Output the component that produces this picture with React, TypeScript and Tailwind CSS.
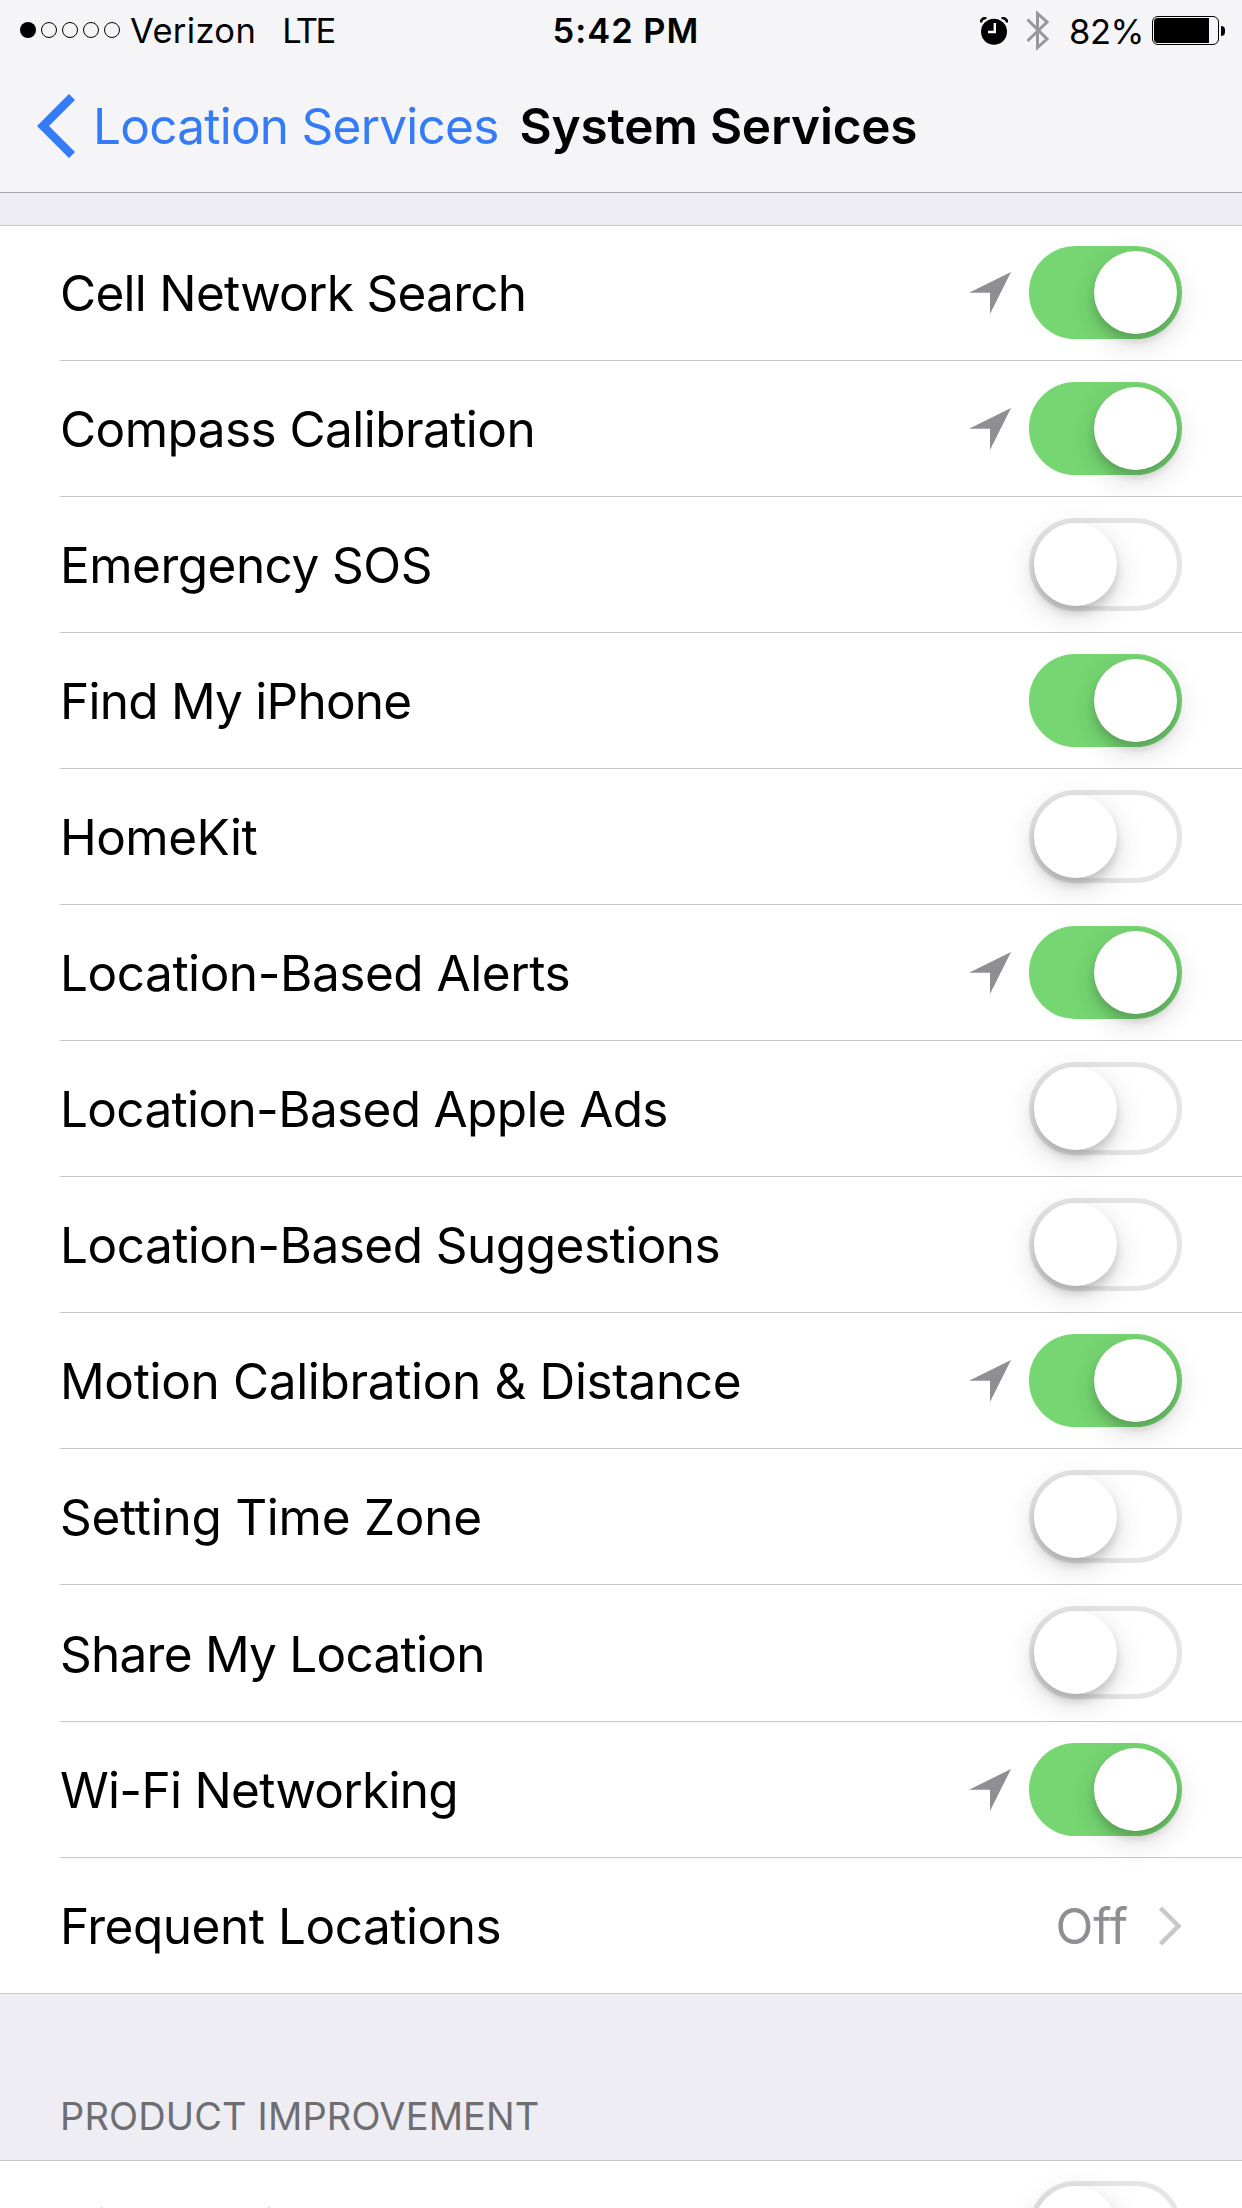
import { useState } from 'react';

type Service = {
  id: string;
  label: string;
  enabled: boolean;
  recentlyUsed?: boolean;
  // letter spacing of the label
  tracking: string;
  // row height, where it is not the usual one
  row?: string;
};

const services: Service[] = [
  { id: 'cell', label: 'Cell Network Search', enabled: true, recentlyUsed: true, tracking: 'pt-[2px] tracking-[-0.72px]', row: 'h-[135px] pb-px' },
  { id: 'compass', label: 'Compass Calibration', enabled: true, recentlyUsed: true, tracking: 'pt-[2px] tracking-[-0.56px]' },
  { id: 'sos', label: 'Emergency SOS', enabled: false, tracking: 'pt-[2px] tracking-[-0.52px]' },
  { id: 'find', label: 'Find My iPhone', enabled: true, tracking: 'pt-[2px] tracking-[-0.76px]' },
  { id: 'homekit', label: 'HomeKit', enabled: false, tracking: 'pt-[2px] tracking-[-0.55px]' },
  { id: 'alerts', label: 'Location-Based Alerts', enabled: true, recentlyUsed: true, tracking: 'pt-[2px] tracking-[-0.46px]' },
  { id: 'ads', label: 'Location-Based Apple Ads', enabled: false, tracking: 'pt-[2px] tracking-[-0.66px]' },
  { id: 'suggestions', label: 'Location-Based Suggestions', enabled: false, tracking: 'pt-[2px] tracking-[-0.51px]' },
  { id: 'motion', label: 'Motion Calibration & Distance', enabled: true, recentlyUsed: true, tracking: 'pt-[2px] tracking-[-0.35px]' },
  { id: 'timezone', label: 'Setting Time Zone', enabled: false, tracking: 'pt-[2px] tracking-[-0.27px]' },
  { id: 'share', label: 'Share My Location', enabled: false, tracking: 'pt-[4px] tracking-[-0.75px]', row: 'h-[137px] pb-px' },
  { id: 'wifi', label: 'Wi-Fi Networking', enabled: true, recentlyUsed: true, tracking: 'pt-[2px] tracking-[-0.7px]' },
];

function LocationArrow() {
  return (
    <svg className="mr-[18px] h-[42px] w-[42px]" viewBox="0 0 42 42" fill="#8e8e93">
      <path d="M42 0 L0 20.8 H21 V42 Z" />
    </svg>
  );
}

type SwitchProps = {
  checked: boolean;
  label: string;
  onChange: () => void;
};

function Switch({ checked, label, onChange }: SwitchProps) {
  return (
    <button
      aria-checked={checked}
      aria-label={label}
      className={`flex h-[93px] w-[153px] shrink-0 rounded-full border-[5px] ${
        checked ? 'justify-end border-[#76d772] bg-[#76d772]' : 'justify-start border-[#e5e5e5] bg-white'
      }`}
      onClick={onChange}
      role="switch"
      type="button"
    >
      <span className="h-[83px] w-[83px] rounded-full bg-white shadow-[0_7px_8px_rgba(0,0,0,0.14),0_9px_30px_rgba(0,0,0,0.16)]" />
    </button>
  );
}

function StatusBar() {
  return (
    <div className="flex h-[60px] items-center text-[34.5px] leading-[60px]">
      <div className="flex w-[552.5px] items-center pl-5">
        <div className="flex gap-[5px]">
          <span className="h-4 w-4 rounded-full bg-black" />
          {[1, 2, 3, 4].map((dot) => (
            <span className="h-4 w-4 rounded-full border border-black" key={dot} />
          ))}
        </div>
        <span className="ml-[10px] pt-[2px] tracking-[0.35px]">Verizon</span>
        <span className="ml-[26px] pt-[2px] tracking-[-2.5px]">LTE</span>
      </div>
      <span className="pt-[2px] font-semibold tracking-[1px]">5:42 PM</span>
      <div className="ml-auto flex items-center pr-[17px] pt-px">
        <svg className="h-[28px] w-[28px]" viewBox="0 0 28 28">
          <circle cx="14" cy="14.8" r="13" fill="#000" />
          <path d="M0.8 5.5 A5 5 0 0 1 6.5 0.9 M21.5 0.9 A5 5 0 0 1 27.2 5.5" fill="none" stroke="#000" strokeWidth="2.6" />
          <path d="M14.8 6 V15 H8" fill="none" stroke="#fff" strokeWidth="2.4" />
        </svg>
        <svg className="ml-[18px] h-[42px] w-[24px]" viewBox="0 0 24 42" fill="none" stroke="#979797" strokeWidth="3">
          <path d="M1.5 9.5 L21 29 L11.5 37.5 V3.5 L21 12 L1.5 31" />
        </svg>
        <span className="ml-[19px] pt-[2px] tracking-[-0.4px]">82%</span>
        <div className="ml-[8px] flex h-[29px] w-[67px] rounded-[6px] border border-black p-px">
          <span className="h-full w-[55px] rounded-l-[4px] bg-black" />
        </div>
        <span className="ml-[2px] h-[10px] w-1 rounded-r-full bg-black" />
      </div>
    </div>
  );
}

export default function App() {
  const [enabled, setEnabled] = useState<Record<string, boolean>>(() =>
    Object.fromEntries(services.map((service) => [service.id, service.enabled])),
  );
  const [diagnostics, setDiagnostics] = useState(false);

  const toggle = (id: string) => setEnabled((current) => ({ ...current, [id]: !current[id] }));

  return (
    <main className="h-[2208px] w-[1242px] overflow-hidden bg-[#eeedf3] font-['Inter',sans-serif] text-[49.5px] text-black">
      <header className="h-[193px] border-b border-[#a7a7ac] bg-[#f5f5f7]">
        <StatusBar />
        <div className="flex h-[132px] items-center pl-[37px] leading-[132px]">
          <svg className="h-[64px] w-[38px]" viewBox="0 0 38 64" fill="none" stroke="#347bf7" strokeWidth="8.5">
            <path d="M35 3 L6 32 L35 61" />
          </svg>
          <button className="ml-[18px] tracking-[-0.75px] text-[#347bf7]" type="button">Location Services</button>
          <h1 className="ml-[21px] font-semibold tracking-[-0.22px]">System Services</h1>
        </div>
      </header>

      <section className="mt-8 border-y border-[#c8c7cc] bg-white">
        {services.map((service) => (
          <div
            className={`ml-[60px] flex items-center border-b border-[#c8c7cc] pr-[60px] ${service.row ?? 'h-[136px]'}`}
            key={service.id}
          >
            <span className={`mr-auto whitespace-nowrap ${service.tracking}`}>{service.label}</span>
            {service.recentlyUsed && <LocationArrow />}
            <Switch checked={enabled[service.id]} label={service.label} onChange={() => toggle(service.id)} />
          </div>
        ))}
        <div className="ml-[60px] flex h-[135px] items-center pr-[60px]">
          <span className="mr-auto pt-[2px] tracking-[-0.48px]">Frequent Locations</span>
          <span className="pt-[2px] text-[#8e8e93]">Off</span>
          <svg className="ml-[30px] h-[40px] w-[24px]" viewBox="0 0 24 40" fill="none" stroke="#c7c7cc" strokeWidth="4.5">
            <path d="M2.5 2 L20.5 20 L2.5 38" />
          </svg>
        </div>
      </section>

      <h2 className="h-[166px] pl-[60px] pt-[92px] text-[38px] leading-[60px] tracking-[0.14px] text-[#6d6d72]">PRODUCT IMPROVEMENT</h2>

      <section className="border-t border-[#c8c7cc] bg-white">
        <div className="ml-[60px] flex h-[134px] items-center pb-px pr-[60px]">
          <span className="mr-auto tracking-[-0.5px]">Diagnostics &amp; Usage</span>
          <Switch checked={diagnostics} label="Diagnostics & Usage" onChange={() => setDiagnostics(!diagnostics)} />
        </div>
      </section>
    </main>
  );
}
